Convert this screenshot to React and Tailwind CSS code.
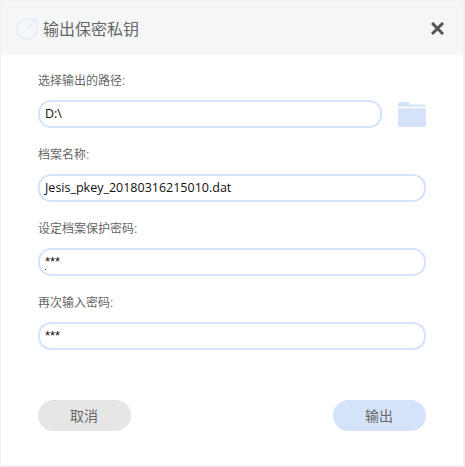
const font = { fontFamily: '"Liberation Sans", "Noto Sans CJK SC", sans-serif' };
const inputFont = { fontFamily: '"Open Sans", "Noto Sans CJK SC", sans-serif' };

function Field({ label, value, short, dot, stars, children }) {
  return (
    <div className="flex flex-col">
      <div className="h-[19px] text-[12px] leading-[19px] text-[#666666] mb-[9px]">{label}</div>
      <div className="flex items-center">
        <div style={stars ? font : inputFont} className={`relative h-[28px] ${short ? "w-[344px]" : "w-[388px]"} rounded-[13px] border-2 border-[#d5e3fa] bg-white pl-[5px] ${stars ? "text-[13px]" : "text-[12.5px]"} leading-[24px] text-[#111111]`}>
          {value}
          {dot && <span className="absolute left-[5px] top-[19px] h-[1px] w-[1px] bg-[#333333]" />}
        </div>
        {children}
      </div>
    </div>
  );
}

export default function App() {
  return (
    <div className="h-[467px] w-[465px] bg-[#f0f0f0] pl-[1px] pt-[1px] pr-[2px] pb-[2px]" style={font}>
      <div className="flex h-full flex-col bg-white">
        <div className="flex h-[54px] items-center justify-between bg-[#f5f6f8] pl-[15px] pr-[19px]">
          <div className="flex items-center gap-[4px]">
            <svg width="23" height="23" viewBox="0 0 23 23" fill="none" stroke="#e3ecfb" strokeWidth="1.6">
              <path d="M16.5 3.5A10 10 0 1 0 21 11.5" />
              <path d="M11 12 L20 3 M14 2.5h6.5V9" />
            </svg>
            <span className="mt-[3px] text-[16px] leading-[24px] text-[#666666]">输出保密私钥</span>
          </div>
          <svg width="13" height="13" viewBox="0 0 13 13" stroke="#555555" strokeWidth="3">
            <path d="M1 1L12 12M12 1L1 12" />
          </svg>
        </div>
        <div className="flex flex-col gap-[18px] pl-[37px] pt-[17px]">
          <Field label="选择输出的路径:" value="D:\" short>
            <svg className="ml-[16px]" width="28" height="25" viewBox="0 0 29 26" fill="#d5e3fa">
              <path d="M0 2Q0 0 2 0H10Q12 0 13 2.5H27Q28.5 2.5 28.5 4V5H0Z" />
              <path d="M0 6.5H27Q29 6.5 29 8V24.5Q29 26 27.5 26H1.5Q0 26 0 24.5Z" />
            </svg>
          </Field>
          <Field label="档案名称:" value="Jesis_pkey_20180316215010.dat" />
          <Field label="设定档案保护密码:" value="***" dot stars />
          <Field label="再次输入密码:" value="***" stars />
        </div>
        <div className="mt-[50px] flex justify-between pl-[37px] pr-[37px]">
          <button className="h-[31px] w-[93px] rounded-full bg-[#e6e6e6] pt-[1px] pr-[1px] text-[14px] text-[#666666]">取消</button>
          <button className="h-[31px] w-[93px] rounded-full bg-[#d5e3fa] pt-[1px] pr-[1px] text-[14px] text-[#666666]">输出</button>
        </div>
      </div>
    </div>
  );
}
